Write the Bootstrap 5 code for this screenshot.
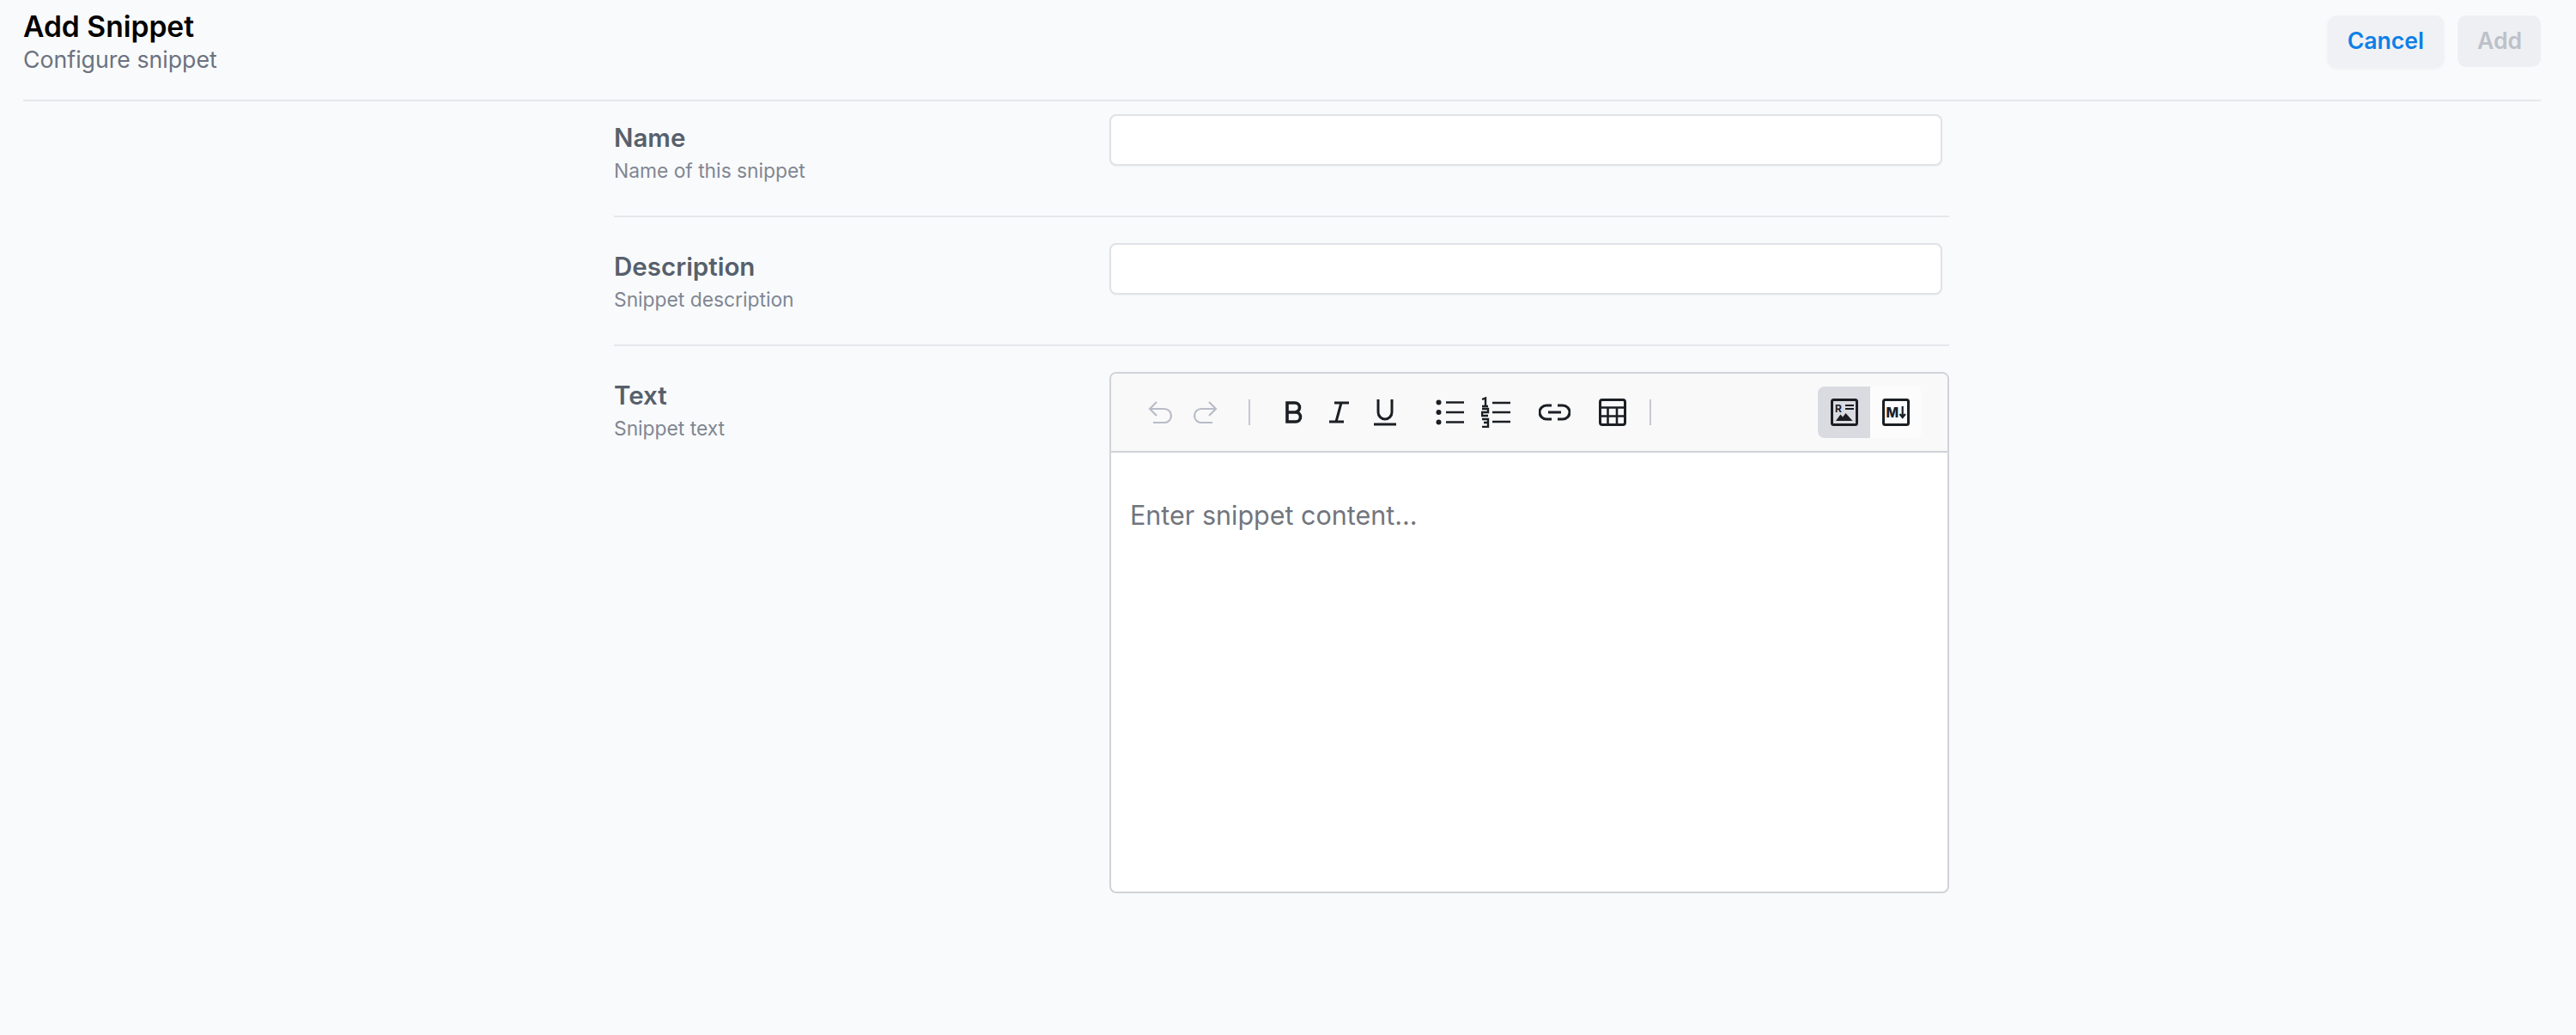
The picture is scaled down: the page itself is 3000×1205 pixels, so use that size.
<!DOCTYPE html>
<html>
<head>
  <title>Add Snippet</title>
  <link href="https://cdn.jsdelivr.net/npm/bootstrap@5.3.0/dist/css/bootstrap.min.css" rel="stylesheet">
  <style>
    body { background: #f9fafb; font-family: Inter, "Liberation Sans", sans-serif; }
    .page-head { margin: 0 41px 0 27px; height: 118px; border-bottom: 2px solid #e5e7eb; }
    .page-title { font-size: 33.6px; line-height: 40px; font-weight: 600; color: #000; margin: 11px 0 0; }
    .page-sub { font-size: 26.7px; line-height: 32px; color: #6b7280; margin: 2px 0 0; }
    .head-btn { height: 60px; margin-top: 18px; font-size: 26.6px; font-weight: 600; border: 0; border-radius: 10px; background: #f0f1f4; padding: 0 23px; }
    .btn-cancel { color: #0d80e6; box-shadow: 0 2px 4px rgba(0,0,0,.05); }
    .btn-add { color: #bcc1c9; background: #eeeff2; width: 97px; }
    .form-area { width: 1555px; margin-left: 715px; }
    .form-line { border-bottom: 2px solid #e5e7eb; height: 150px; padding-top: 30px; }
    .form-line.first-line { height: 135px; padding-top: 15px; }
    .form-line.last-line { border: 0; height: auto; padding-top: 30px; }
    .label-col { width: 577px; flex: none; }
    .field-name { font-size: 29.5px; line-height: 40px; font-weight: 600; color: #56606c; padding-top: 7px; }
    .field-hint { font-size: 22.8px; line-height: 32px; color: #7f8793; margin-top: 3px; }
    .text-input { width: 970px; height: 60px; background: #fff; border: 2px solid #e0e2e7; border-radius: 8px; box-shadow: 0 1px 2px rgba(0,0,0,.04); }
    .editor-box { width: 978px; height: 607px; background: #fff; border: 2px solid #d1d3d8; border-radius: 8px; overflow: hidden; }
    .editor-bar { height: 92px; background: #f9f9fa; border-bottom: 2px solid #d1d3d8; padding: 0 30px 0 43px; }
    .tool { display: flex; align-items: center; justify-content: center; flex: none; color: #1b1f23; }
    .tool svg { display: block; }
    .tool-off { color: #b9bcc9; }
    .bar-sep { width: 2px; height: 30px; background: #c6c8d4; flex: none; }
    .tool-redo { margin-left: 23px; }
    .sep-one { margin-left: 36px; }
    .tool-b { margin-left: 41px; }
    .tool-i { margin-left: 30px; }
    .tool-u { margin-left: 28px; }
    .tool-ul { margin-left: 46px; }
    .tool-ol { margin-left: 20px; }
    .tool-link { margin-left: 33px; }
    .tool-table { margin-left: 33px; }
    .sep-two { margin-left: 27px; }
    .mode-btn { width: 61px; height: 60px; background: #fcfcfc; }
    .mode-btn.active-mode { background: #dadbe0; border-radius: 8px 0 0 8px; }
    .mode-btn.last-mode { border-radius: 0 8px 8px 0; width: 60px; }
    .editor-text { font-size: 30.5px; line-height: 40px; color: #71757d; padding: 53px 22px 0; }
  </style>
</head>
<body>
  <div class="page-head d-flex justify-content-between">
    <div>
      <h1 class="page-title">Add Snippet</h1>
      <p class="page-sub">Configure snippet</p>
    </div>
    <div class="d-flex gap-3 align-items-start">
      <button class="head-btn btn-cancel">Cancel</button>
      <button class="head-btn btn-add">Add</button>
    </div>
  </div>

  <div class="form-area">
    <div class="form-line first-line d-flex">
      <div class="label-col">
        <div class="field-name">Name</div>
        <div class="field-hint">Name of this snippet</div>
      </div>
      <input class="text-input" type="text">
    </div>
    <div class="form-line d-flex">
      <div class="label-col">
        <div class="field-name">Description</div>
        <div class="field-hint">Snippet description</div>
      </div>
      <input class="text-input" type="text">
    </div>
    <div class="form-line last-line d-flex">
      <div class="label-col">
        <div class="field-name">Text</div>
        <div class="field-hint">Snippet text</div>
      </div>
      <div class="editor-box">
        <div class="editor-bar d-flex align-items-center">
          <span class="tool tool-off"><svg width="29" height="26" viewBox="0 0 29 26" fill="none" stroke="currentColor" stroke-width="2.2"><path d="M10 1 2 9l8 8"/><path d="M2 9h17a8 8 0 0 1 0 16H6"/></svg></span>
          <span class="tool tool-off tool-redo"><svg width="29" height="26" viewBox="0 0 29 26" fill="none" stroke="currentColor" stroke-width="2.2"><path d="m19 1 8 8-8 8"/><path d="M27 9H10a8 8 0 0 0 0 16h13"/></svg></span>
          <span class="bar-sep sep-one"></span>
          <span class="tool tool-b"><svg width="20" height="26" viewBox="0 0 20 26" fill="none" stroke="currentColor" stroke-width="3.6"><path d="M2 2h9a5 5 0 0 1 0 11H2zM2 13h10a5.500 5.500 0 0 1 0 11H2z"/></svg></span>
          <span class="tool tool-i"><svg width="25" height="26" viewBox="0 0 25 26" fill="none" stroke="currentColor" stroke-width="3"><path d="M7 2h17M1 24h17M15 2 9 24"/></svg></span>
          <span class="tool tool-u"><svg width="26" height="32" viewBox="0 0 26 32" fill="none" stroke="currentColor" stroke-width="3"><path d="M5 1v15a8 8 0 0 0 16 0V1"/><path d="M0 30h26"/></svg></span>
          <span class="tool tool-ul"><svg width="33" height="30" viewBox="0 0 33 30" fill="none" stroke="currentColor" stroke-width="2.4"><circle cx="3.500" cy="3.500" r="3" fill="currentColor" stroke="none"/><circle cx="3.500" cy="15" r="3" fill="currentColor" stroke="none"/><circle cx="3.500" cy="26.500" r="3" fill="currentColor" stroke="none"/><path d="M12 3.500h21M12 15h21M12 26.500h21"/></svg></span>
          <span class="tool tool-ol"><svg width="34" height="36" viewBox="0 0 34 36" fill="none" stroke="currentColor" stroke-width="2.400"><path d="M1 3 5 1.500v10M1 11h7M1 14h7v4H1v4h7M1 26h7v4H3M8 30v5H1M13 7h21M13 18h21M13 29h21"/></svg></span>
          <span class="tool tool-link"><svg width="37" height="20" viewBox="0 0 37 20" fill="none" stroke="currentColor" stroke-width="3"><path d="M15 2H9a8 8 0 0 0 0 16h6M22 2h6a8 8 0 0 1 0 16h-6M11 10h15"/></svg></span>
          <span class="tool tool-table"><svg width="32" height="32" viewBox="0 0 32 32" fill="none" stroke="currentColor"><rect x="1.500" y="1.500" width="29" height="29" rx="2.500" stroke-width="3"/><path stroke-width="2.600" d="M1 10.500h30M1 20.500h30M10.500 10v21M21 10v21"/></svg></span>
          <span class="bar-sep sep-two"></span>
          <span class="tool mode-btn active-mode ms-auto"><svg width="32" height="32" viewBox="0 0 32 32" fill="none"><rect x="1.500" y="1.500" width="29" height="29" rx="2" stroke="currentColor" stroke-width="3"/><path fill="currentColor" d="M6 26l5.500-7.500 2.500 3 3.500-4.500 8 9z"/><text x="5" y="15.500" font-size="12" font-weight="700" font-family="Inter, sans-serif" fill="currentColor">R</text><path stroke="currentColor" stroke-width="2" d="M17 8h10M17 12h10"/></svg></span>
          <span class="tool mode-btn last-mode"><svg width="32" height="32" viewBox="0 0 32 32" fill="none"><rect x="1.500" y="1.500" width="29" height="29" rx="2" stroke="currentColor" stroke-width="3"/><text x="4.500" y="21.500" font-size="15.500" font-weight="800" font-family="Inter, sans-serif" fill="currentColor">M</text><path stroke="currentColor" stroke-width="2.200" d="M23.700 9v13M20.500 18l3.200 4 3.200-4"/></svg></span>
        </div>
        <div class="editor-text">Enter snippet content...</div>
      </div>
    </div>
  </div>
</body>
</html>
